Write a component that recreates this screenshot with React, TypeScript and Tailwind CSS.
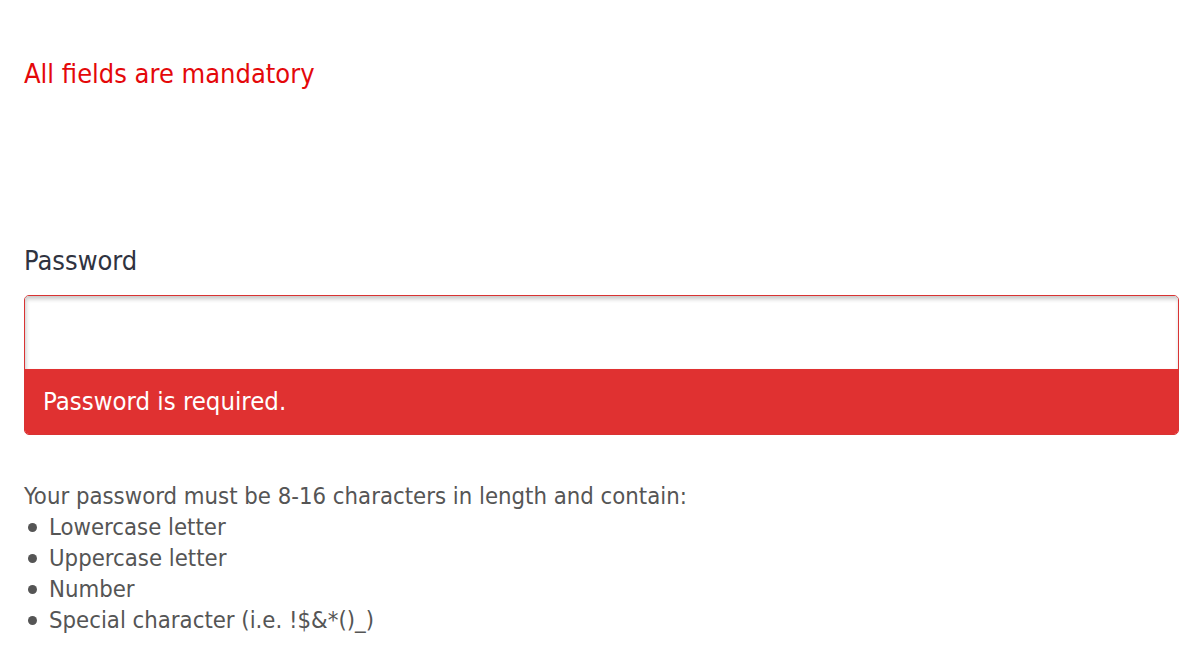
export default function App() {
  const rules = ['Lowercase letter', 'Uppercase letter', 'Number', 'Special character (i.e. !$&*()_)']
  return (
    <div
      className="w-[1200px] h-[655px] bg-white pl-[24px] pr-[21px] pt-[58px] overflow-hidden"
      style={{ fontFamily: '"DejaVu Sans Condensed", "DejaVu Sans", sans-serif' }}
    >
      <p className="text-[27px] leading-[32px] text-[#e4080a]">All fields are mandatory</p>

      <label className="block mt-[155px] text-[27px] leading-[32px] text-[#2f3340]">Password</label>

      <div className="mt-[18px] rounded-[5px] border border-[#d93333] overflow-hidden">
        <input
          type="password"
          className="block w-full h-[73px] bg-white shadow-[inset_1px_3px_4px_rgba(0,0,0,0.22)] outline-none"
        />
        <div className="h-[65px] bg-[#e03131] flex items-center px-[18px] text-[25.5px] text-white">
          Password is required.
        </div>
      </div>

      <div className="mt-[46px] text-[23.7px] leading-[31px] text-[#555555]">
        <p>Your password must be 8-16 characters in length and contain:</p>
        <ul>
          {rules.map((r) => (
            <li key={r} className="flex items-center gap-[12px]">
              <span className="w-[9px] h-[9px] rounded-full bg-[#555555] ml-[4px]" />
              {r}
            </li>
          ))}
        </ul>
      </div>
    </div>
  )
}
